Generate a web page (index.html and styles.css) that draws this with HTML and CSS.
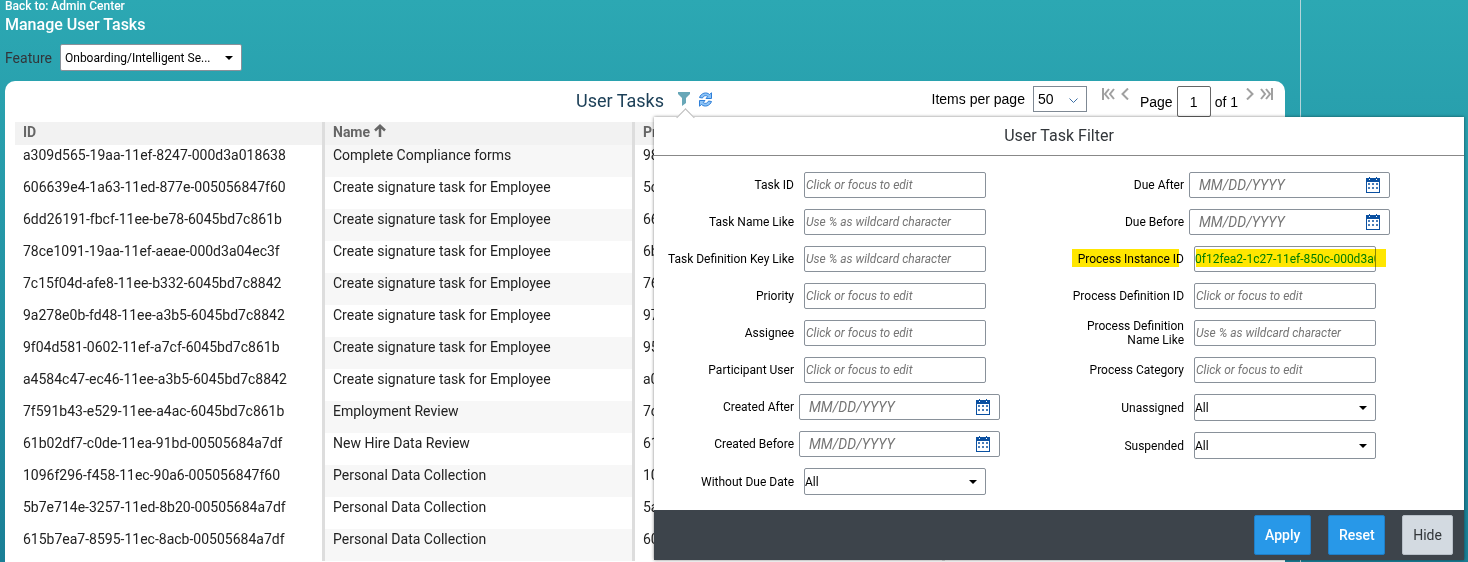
FILE: index.html
```
<!DOCTYPE html>
<html lang="en">
<head>
    <meta charset="UTF-8">
    <title>Manage User Tasks</title>
    <link rel="stylesheet" href="styles.css">
</head>
<body>

<svg class="defs" width="0" height="0" aria-hidden="true">
    <symbol id="calendar" viewBox="0 0 14 16">
        <path fill="#0a50a1" fill-rule="evenodd" d="M0 1h3V0h1v1h6V0h1v1h3v15H0zM1 5v10h12V5zM3 2v1h1V2zM10 2v1h1V2z"/>
        <path fill="#4a7db8" d="M2 6h2v2H2zM6 6h2v2H6zM10 6h2v2h-2zM2 10h2v2H2zM6 10h2v2H6zM10 10h2v2h-2z"/>
    </symbol>
</svg>

<div class="page">
    <main class="main">
        <a class="back" href="#">Back to: Admin Center</a>
        <h1>Manage User Tasks</h1>
        <div class="feature">
            <label for="feature">Feature</label>
            <span class="select">
                <select id="feature"><option>Onboarding/Intelligent Se...</option></select>
            </span>
        </div>

        <section class="panel">
            <div class="toolbar">
                <h2>User Tasks</h2>
                <button class="icon" aria-label="Filter">
                    <svg width="12" height="14" viewBox="0 0 12 14"><path fill="#68a7b8" d="M0 0h12v2L8 6v5l-4 3V6L0 2z"/></svg>
                </button>
                <button class="icon" aria-label="Refresh">
                    <svg width="15" height="15" viewBox="0 0 15 15">
                        <path fill="#8cc3f7" stroke="#2f7fd8" d="M1.5 5.5C3 1 8.500 -.5 11.500 2.500L13.500 .8V6.500H8L9.800 4.500C8 3 5.500 3.500 4.500 6zM13.500 9.500C12 14 6.500 15.500 3.500 12.500L1.500 14.200V8.500H7L5.200 10.500C7 12 9.500 11.500 10.500 9z"/>
                    </svg>
                </button>
                <div class="pager">
                    <label for="perpage">Items per page</label>
                    <span class="perpage">
                        <select id="perpage"><option>50</option></select>
                        <svg width="9" height="6" viewBox="0 0 9 6"><path fill="none" stroke="#3c6ea5" d="M.5 .5l4 4 4-4"/></svg>
                    </span>
                    <button class="icon first" aria-label="First page">
                        <svg width="13" height="12" viewBox="0 0 13 12"><path fill="none" stroke="#a0a0a0" stroke-width="2" d="M1 0v12M7 1L3 6l4 5M12 1L8 6l4 5"/></svg>
                    </button>
                    <button class="icon prev" aria-label="Previous page">
                        <svg width="8" height="12" viewBox="0 0 8 12"><path fill="none" stroke="#a0a0a0" stroke-width="2" d="M7 .5L1.500 6 7 11.500"/></svg>
                    </button>
                    <label class="low" for="pageno">Page</label>
                    <input class="pageno" id="pageno" value="1">
                    <span class="low">of 1</span>
                    <button class="icon next" aria-label="Next page">
                        <svg width="8" height="12" viewBox="0 0 8 12"><path fill="none" stroke="#a0a0a0" stroke-width="2" d="M1 .5L6.500 6 1 11.500"/></svg>
                    </button>
                    <button class="icon last" aria-label="Last page">
                        <svg width="13" height="12" viewBox="0 0 13 12"><path fill="none" stroke="#a0a0a0" stroke-width="2" d="M12 0v12M1 1l4 5-4 5M6 1l4 5-4 5"/></svg>
                    </button>
                </div>
            </div>

            <table class="tasks">
                <thead>
                    <tr>
                        <th>ID</th>
                        <th>Name<svg width="12" height="13" viewBox="0 0 12 13"><path fill="none" stroke="#666" stroke-width="2.500" d="M6 13V2M1 6.500L6 1.800l5 4.700"/></svg></th>
                        <th>Process Instance ID</th>
                        <th></th>
                    </tr>
                </thead>
                <tbody>
                    <tr><td>a309d565-19aa-11ef-8247-000d3a018638</td><td>Complete Compliance forms</td><td>98</td><td></td></tr>
                    <tr><td>606639e4-1a63-11ed-877e-005056847f60</td><td>Create signature task for Employee</td><td>5c</td><td></td></tr>
                    <tr><td>6dd26191-fbcf-11ee-be78-6045bd7c861b</td><td>Create signature task for Employee</td><td>66</td><td></td></tr>
                    <tr><td>78ce1091-19aa-11ef-aeae-000d3a04ec3f</td><td>Create signature task for Employee</td><td>6b</td><td></td></tr>
                    <tr><td>7c15f04d-afe8-11ee-b332-6045bd7c8842</td><td>Create signature task for Employee</td><td>76</td><td></td></tr>
                    <tr><td>9a278e0b-fd48-11ee-a3b5-6045bd7c8842</td><td>Create signature task for Employee</td><td>97</td><td></td></tr>
                    <tr><td>9f04d581-0602-11ef-a7cf-6045bd7c861b</td><td>Create signature task for Employee</td><td>95</td><td></td></tr>
                    <tr><td>a4584c47-ec46-11ee-a3b5-6045bd7c8842</td><td>Create signature task for Employee</td><td>a0</td><td></td></tr>
                    <tr><td>7f591b43-e529-11ee-a4ac-6045bd7c861b</td><td>Employment Review</td><td>7c</td><td></td></tr>
                    <tr><td>61b02df7-c0de-11ea-91bd-00505684a7df</td><td>New Hire Data Review</td><td>61</td><td></td></tr>
                    <tr><td>1096f296-f458-11ec-90a6-005056847f60</td><td>Personal Data Collection</td><td>10</td><td></td></tr>
                    <tr><td>5b7e714e-3257-11ed-8b20-00505684a7df</td><td>Personal Data Collection</td><td>5a</td><td></td></tr>
                    <tr><td>615b7ea7-8595-11ec-8acb-00505684a7df</td><td>Personal Data Collection</td><td>60</td><td></td></tr>
                </tbody>
            </table>
        </section>
    </main>
    <aside class="side"></aside>
</div>

<form class="filter">
    <h3>User Task Filter</h3>
    <div class="fields">
        <div class="column">
            <div class="field"><label for="taskid">Task ID</label><input id="taskid" placeholder="Click or focus to edit"></div>
            <div class="field"><label for="taskname">Task Name Like</label><input id="taskname" placeholder="Use % as wildcard character"></div>
            <div class="field"><label for="taskkey">Task Definition Key Like</label><input id="taskkey" placeholder="Use % as wildcard character"></div>
            <div class="field"><label for="priority">Priority</label><input id="priority" placeholder="Click or focus to edit"></div>
            <div class="field"><label for="assignee">Assignee</label><input id="assignee" placeholder="Click or focus to edit"></div>
            <div class="field"><label for="participant">Participant User</label><input id="participant" placeholder="Click or focus to edit"></div>
            <div class="field date">
                <label for="createdafter">Created After</label>
                <span class="picker"><input id="createdafter" placeholder="MM/DD/YYYY"><svg width="14" height="16"><use href="#calendar"/></svg></span>
            </div>
            <div class="field date">
                <label for="createdbefore">Created Before</label>
                <span class="picker"><input id="createdbefore" placeholder="MM/DD/YYYY"><svg width="14" height="16"><use href="#calendar"/></svg></span>
            </div>
            <div class="field">
                <label for="nodue">Without Due Date</label>
                <span class="select"><select id="nodue"><option>All</option></select></span>
            </div>
        </div>
        <div class="column">
            <div class="field date">
                <label for="dueafter">Due After</label>
                <span class="picker"><input id="dueafter" placeholder="MM/DD/YYYY"><svg width="14" height="16"><use href="#calendar"/></svg></span>
            </div>
            <div class="field date">
                <label for="duebefore">Due Before</label>
                <span class="picker"><input id="duebefore" placeholder="MM/DD/YYYY"><svg width="14" height="16"><use href="#calendar"/></svg></span>
            </div>
            <div class="field marked">
                <label for="instanceid">Process Instance ID</label>
                <input id="instanceid" value="0f12fea2-1c27-11ef-850c-000d3a018638">
            </div>
            <div class="field"><label for="definitionid">Process Definition ID</label><input id="definitionid" placeholder="Click or focus to edit"></div>
            <div class="field"><label for="definitionname">Process Definition Name Like</label><input id="definitionname" placeholder="Use % as wildcard character"></div>
            <div class="field"><label for="category">Process Category</label><input id="category" placeholder="Click or focus to edit"></div>
            <div class="field">
                <label for="unassigned">Unassigned</label>
                <span class="select"><select id="unassigned"><option>All</option></select></span>
            </div>
            <div class="field">
                <label for="suspended">Suspended</label>
                <span class="select"><select id="suspended"><option>All</option></select></span>
            </div>
        </div>
    </div>
    <div class="actions">
        <button type="button" class="primary">Apply</button>
        <button type="button" class="primary">Reset</button>
        <button type="button" class="hide">Hide</button>
    </div>
</form>

</body>
</html>
```
FILE: styles.css
```
* {
    box-sizing: border-box;
}
body {
    margin: 0;
    font-family: Roboto, "Noto Sans", sans-serif;
    font-size: 14px;
    color: #222;
    background: linear-gradient(#2ca8b3, #1a7f96) fixed;
}
input, select, button {
    font-family: inherit;
    color: inherit;
    margin: 0;
}
.defs {
    position: absolute;
}
.page {
    display: flex;
    min-height: 100vh;
}
.main {
    flex: 1;
    min-width: 0;
    display: flex;
    flex-direction: column;
    padding: 0 15px 0 5px;
}
.side {
    width: 168px;
    border-left: 1px solid #b5d5db;
}
.back {
    align-self: flex-start;
    font-size: 12px;
    line-height: 13px;
    font-weight: 500;
    color: #fff;
    text-decoration: none;
}
h1 {
    margin: 0;
    font-size: 16px;
    line-height: 24px;
    font-weight: 500;
    color: #fff;
}
.feature {
    display: flex;
    align-items: center;
    gap: 8px;
    margin: 7px 0 10px;
}
.feature label {
    width: 47px;
    font-size: 14px;
    color: #32363a;
    white-space: nowrap;
}
.select {
    position: relative;
    display: block;
    width: 182px;
}
.select::after {
    content: "";
    position: absolute;
    right: 9px;
    top: 12px;
    border: 4px solid transparent;
    border-top-color: #000;
    border-bottom: 0;
}
.select select {
    appearance: none;
    display: block;
    width: 100%;
    height: 27px;
    padding: 0;
    border: 1px solid #89919a;
    border-radius: 2px;
    background: #fff;
    color: #000;
    font-size: 12px;
}
.feature select {
    padding-left: 4px;
}

/* task list */
.panel {
    flex: 1;
    padding: 0 0 0 10px;
    background: #fff;
    border-radius: 10px 10px 0 0;
}
.toolbar {
    display: flex;
    height: 41px;
    padding-left: 561px;
    color: #000;
}
h2 {
    margin: 0 14px 0 0;
    font-size: 18px;
    line-height: 39px;
    font-weight: 400;
    color: #1d4058;
    white-space: nowrap;
}
.icon {
    display: block;
    padding: 0;
    border: 0;
    background: none;
    align-self: flex-start;
    margin: 11px 8px 0 0;
}
.icon svg {
    display: block;
}
.pager {
    flex: 1;
    display: flex;
    justify-content: flex-end;
    font-family: "Liberation Sans", Arial, sans-serif;
    font-size: 14px;
    line-height: 36px;
    padding-right: 12px;
}
.perpage {
    position: relative;
    margin: 5px 15px 0 8px;
}
.perpage select {
    appearance: none;
    display: block;
    width: 54px;
    height: 26px;
    padding: 0 4px;
    border: 1px solid #7f8994;
    border-radius: 0;
    background: #fff;
    font-size: 14px;
}
.perpage svg {
    position: absolute;
    right: 9px;
    top: 12px;
}
.pager .icon {
    margin: 7px 6px 0 0;
}
.pager .prev {
    margin-right: 11px;
}
.low {
    line-height: 42px;
}
.pageno {
    width: 34px;
    height: 31px;
    margin: 5px 4px 0;
    padding: 0;
    border: 1px solid #666;
    border-radius: 2px;
    font-size: 14px;
    text-align: center;
}
.pager .next {
    margin-left: 8px;
}
.pager .last {
    margin-right: 0;
}
.tasks {
    width: 100%;
    table-layout: fixed;
    border-collapse: separate;
    border-spacing: 0;
}
.tasks th, .tasks td {
    width: 310px;
    padding: 0 8px;
    border-right: 3px solid #ddd;
    text-align: left;
    vertical-align: top;
    line-height: 21px;
    white-space: nowrap;
    overflow: hidden;
}
.tasks th:last-child, .tasks td:last-child {
    width: auto;
    border-right: 0;
}
.tasks th {
    height: 23px;
    background: #f2f2f2;
    color: #666;
    font-weight: 700;
}
.tasks th svg {
    margin-left: 4px;
}
.tasks td {
    height: 32px;
}
.tasks tr:nth-child(odd) td:nth-child(2) {
    background: #f7f7f7;
}

/* filter popup over the list */
.filter {
    position: absolute;
    top: 117px;
    left: 654px;
    right: 4px;
    background: #fff;
    color: #000;
    box-shadow: 0 0 3px rgba(0, 0, 0, 0.5);
}
.filter::before {
    content: "";
    position: absolute;
    left: 25px;
    top: -6px;
    width: 12px;
    height: 12px;
    background: #fff;
    border: 1px solid #bbb;
    border-width: 1px 0 0 1px;
    transform: rotate(45deg);
}
h3 {
    position: relative;
    margin: 0;
    height: 39px;
    border-bottom: 1px solid #888;
    font-size: 16px;
    line-height: 38px;
    font-weight: 400;
    text-align: center;
    color: #32363a;
}
.fields {
    display: grid;
    grid-template-columns: 13fr 14fr;
    padding: 16px 0 15px;
}
.column {
    display: flex;
    flex-direction: column;
    gap: 11px;
}
.field {
    display: flex;
    align-items: center;
    gap: 10px;
    font-size: 12px;
    line-height: 14px;
}
.field label {
    width: 140px;
    margin: -1px 0;
    padding-left: 10px;
    text-align: right;
}
.column + .column label {
    padding-left: 20px;
}
.field input {
    width: 182px;
    height: 26px;
    padding: 0 1px;
    border: 1px solid #89919a;
    border-radius: 2px;
    background: #fff;
    font-size: 12px;
}
.field input::placeholder {
    color: #757575;
    font-style: italic;
}
.date {
    gap: 5px;
}
.picker {
    position: relative;
}
.field .picker input {
    display: block;
    width: 201px;
    padding: 0 9px;
    font-size: 14px;
}
.picker svg {
    position: absolute;
    right: 10px;
    top: 5px;
}
.marked {
    position: relative;
}
.marked::before, .marked::after {
    content: "";
    position: absolute;
    top: 3px;
    height: 18px;
    background: #ffe600;
    mix-blend-mode: multiply;
}
.marked::before {
    left: 28px;
    width: 107px;
}
.marked::after {
    left: 152px;
    width: 190px;
}
.field.marked input {
    padding: 0;
    color: #008a20;
}
.actions {
    display: flex;
    justify-content: flex-end;
    gap: 17px;
    padding: 5px 11px;
    background: #3d444b;
}
.actions button {
    height: 40px;
    padding: 0 10px;
    border: 1px solid #1f7fc8;
    border-radius: 2px;
    background: #2898e8;
    color: #fff;
    font-size: 14px;
    font-weight: 500;
}
.actions .primary {
    width: 57px;
}
.actions .hide {
    width: 51px;
    border-color: #b8c0c8;
    background: #d3dae1;
    color: #32363a;
    font-weight: 400;
}
```
